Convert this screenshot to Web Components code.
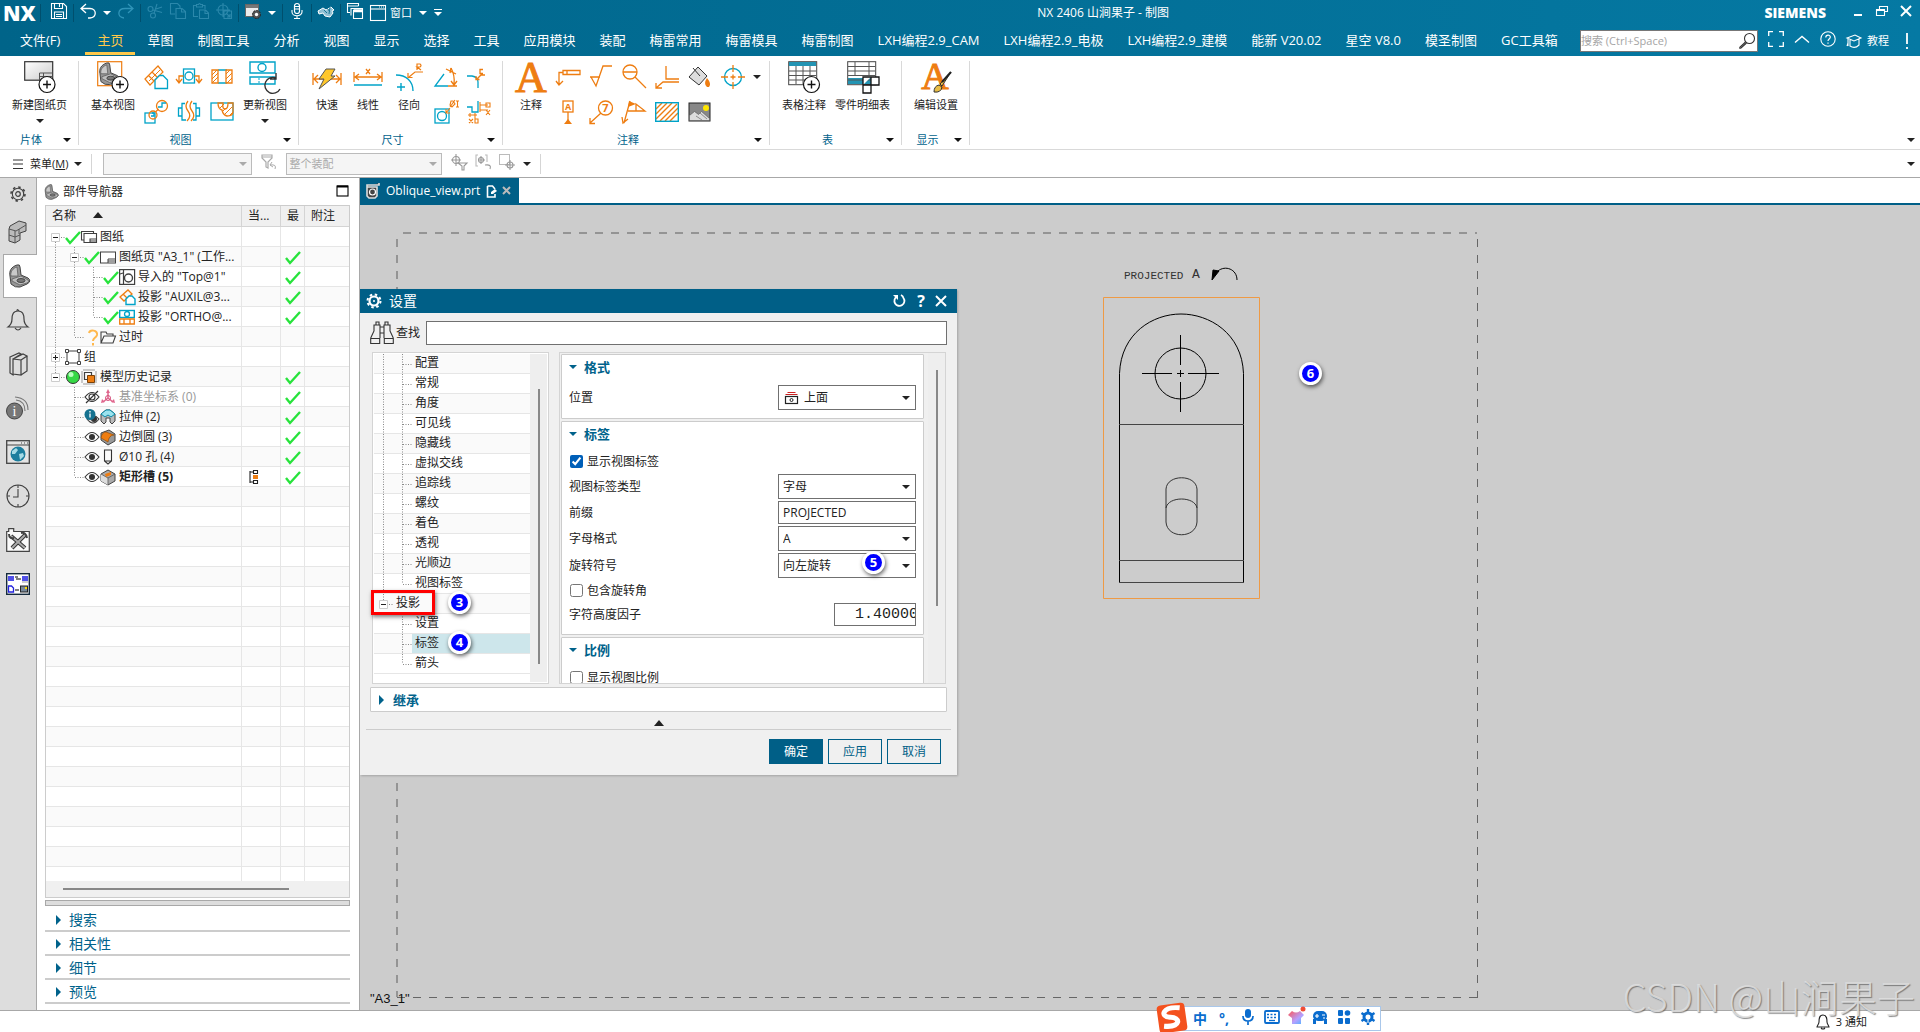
<!DOCTYPE html>
<html lang="zh-CN">
<head>
<meta charset="utf-8">
<title>NX 2406 - 制图</title>
<style>
html,body{margin:0;height:100%;overflow:hidden}
body{font:12px/16px "Open Sans","Noto Sans CJK SC",sans-serif;color:#222;background:#fff}
</style>
</head>
<body>
<nx-app></nx-app>
<script>
const O='#ee7d11',C='#00a3c8',D='#404040';
const s=(c,w=1.3,f='none')=>`fill="${f}" stroke="${c}" stroke-width="${w}"`;
const plus=(x,y,r=8)=>`<circle cx="${x}" cy="${y}" r="${r}" ${s('#111',1.2,'#fff')}/><path d="M${x-4} ${y}h8M${x} ${y-4}v8" ${s('#111',1.4)}/>`;
const bracket=`<path d="M2 12C1 7 3 3 9 1q3-1 3 2l1 8 7 3q4 3-1 6l-7 3q-5 1-9-3z" fill="#969696" stroke="#444" stroke-width="1"/><path d="M3 12C2 8 5 4 9 3l1 9z" fill="#c9c9c9" stroke="#555" stroke-width=".7"/><path d="M4 15l9-3 7 4q2 1-1 3l-7 2-8-4z" fill="#bdbdbd" stroke="#555" stroke-width=".7"/><ellipse cx="13" cy="16.500" rx="4" ry="2" fill="#777" stroke="#333" stroke-width=".8"/>`;
const I={
caret:[8,8,`<path d="M0 2h8L4 6z" fill="currentColor"/>`],
caretR:[8,10,`<path d="M1 0v10l5-5z" fill="currentColor"/>`],
caretUp:[10,6,`<path d="M0 6h10L5 0z" fill="currentColor"/>`],
drop:[8,8,`<path d="M0 .500h8" ${s('currentColor',1)}/><path d="M0 3h8L4 7z" fill="currentColor"/>`],
save:[16,16,`<path d="M.5.5h12l3 3v12H.500zM3.500.500v5h8v-5M3.500 15v-6h9v6M5 11.500h6M5 13.500h6M8.500 1v3" ${s('#fff',1.1)}/>`],
undo:[16,16,`<path d="M6 1L1 5.500 6 10M1 5.500h9c7 0 7 9 0 9.500H8" ${s('#fff',1.3)}/>`],
redo:[16,16,`<path d="M10 1l5 4.500-5 4.500M15 5.500H7c-8 0-8 9-1 9.500" ${s('#2f94b8',1.3)}/>`],
cut:[16,16,`<g ${s('#2b88ab',1.1)}><circle cx="3.500" cy="6" r="2.500"/><circle cx="6" cy="12.500" r="2.500"/><path d="M6 7l9 2.500M7 10.500L10 1M9 6l6-2"/></g>`],
copy:[16,16,`<path d="M5 11H.5V.500h7L10 3v2M6 5.500h6l3.500 3v7H6zM11.500 5.500v3.500h4" ${s('#2b88ab',1.1)}/>`],
paste:[16,16,`<path d="M5 13.500H.500V2.500h3M9 2.500h3V6M3.500 4V1.500h2q1-2 2 0h2V4zM6.500 7h6l3 3v5.500h-9zM12 7v3.500h3.500" ${s('#2b88ab',1.1)}/>`],
target:[16,16,`<g ${s('#2b88ab',1.1)}><circle cx="7" cy="7" r="5"/><path d="M0 7h14M7 0v14M8 8h7.500v7.500H8zM10 10l4 4M14 11v3h-3"/></g>`],
wingear:[16,16,`<rect x=".5" y="1.500" width="13" height="12" fill="#ececec" stroke="#666"/><path d="M1 2h12v3H1z" fill="#777"/><circle cx="11.500" cy="11.500" r="4" fill="#555" stroke="#222" stroke-dasharray="2 1"/><circle cx="11.500" cy="11.500" r="1.700" fill="#fff"/>`],
mic:[16,16,`<rect x="5.500" y=".5" width="5" height="10" rx="2.500" ${s('#fff',1.2)}/><path d="M5.500 3.500h5M5.500 6h5M3 7v2c0 5 10 5 10 0V7M8 13v2.500M5 15.500h6" ${s('#fff',1.1)}/>`],
hand:[16,16,`<path d="M0 8l5-3 3 2 5-3 3 3-2 1 1 2-3 4-5-1-2-3-4 1z" fill="#8fc0d4" stroke="#fff"/><path d="M6 7l3 3M9 5l3 4M12 4l-1 7" ${s('#1b7797',1)}/>`],
wins:[16,16,`<g ${s('#fff',1.1)}><path d="M3 9.500H.500v-9h11V3M.500 3h11M4 12.500V5.500h11.500v10H6.500V7"/><path d="M6.500 8.500h9M6.500 7h9" stroke-width="1.600"/></g>`],
win:[16,16,`<rect x=".5" y=".5" width="15" height="15" ${s('#fff',1.1)}/><path d="M.500 4h15" ${s('#fff',1.1)}/><path d="M9 2h1M11 2h1M13 2h1" ${s('#fff',1)}/>`],
min:[12,12,`<path d="M2 10h8" ${s('#fff',2)}/>`],
restore:[12,12,`<path d="M3.500 4V1.500h8v5H9M.500 4.500h8v6h-8zM.500 5.500h8" ${s('#fff',1.1)}/>`],
close:[12,12,`<path d="M1 1l10 10M11 1L1 11" ${s('currentColor',2)}/>`],
search:[16,16,`<circle cx="10.500" cy="5.500" r="5" ${s('#333',1.1)}/><path d="M6.500 9L1 14q-1 2 1 1L7.500 10" ${s('#333',1.1)}/>`],
full:[16,16,`<path d="M.7 5V.7H5M11 .7h4.300V5M15.300 11v4.300H11M5 15.300H.7V11" ${s('#fff',1.3)}/>`],
chev:[16,16,`<path d="M1 11.500l7-6 7 6" ${s('#fff',1.4)}/>`],
help:[16,16,`<circle cx="8" cy="8" r="7.200" ${s('#fff',1.1)}/><path d="M5.800 6.500c0-3 4.500-3 4.500-.4C10.300 8 8 8 8 10M8 11.500v1.300" ${s('#fff',1.2)}/>`],
hat:[16,16,`<path d="M1 5l8-3 6 3-7 3zM4 7v6c3 2 6 2 9-1V6M2 6v7M2 10l-1 3" ${s('#fff',1.1)}/>`],
bang:[4,16,`<path d="M2 0v11M2 14v2" ${s('#fff',1.8)}/>`],
newsheet:[32,32,`<defs><linearGradient id="g" x2="1" y2="1"><stop stop-color="#fff"/><stop offset="1" stop-color="#ccc"/></linearGradient></defs><rect x=".7" y=".7" width="28" height="18.500" fill="url(#g)" stroke="#333" stroke-width="1.200"/><path d="M15.500 19v-7h13M15.500 15.500h13M19.500 12v7" ${s('#555',1)}/>${plus(23,23.500)}`],
baseview:[32,32,`<rect x=".7" y=".7" width="24" height="24" ${s(O,1.2)}/><g transform="translate(1,1) scale(.98)">${bracket}</g>${plus(23,23.500)}`],
auxview:[24,24,`<path d="M1 14L14 1l5 6L6 20zM4.500 10.500l6 6M8 7l6 6" ${s(O,1.2)}/><path d="M5 16L16 5" ${s(O,1)}/><path d="M11 23.500V15l4.500-4.500H19l4.500 4.500v8.500z" ${s(C,1.3,'#fff')}/>`],
section:[24,24,`<rect x="6.500" y="4" width="11" height="14" ${s(C)}/><circle cx="12" cy="11" r="4" ${s(C)}/><path d="M2 18V11h4.500M17.500 11H22v7M-1 14l3 4 3-4M19 14l3 4 3-4" ${s(O)}/>`],
half:[22,24,`<path d="M7 5h9M7 18h9" ${s(C)}/><path d="M1 5h6v13H1zM15 5h6v13h-6z" ${s(O)}/><path d="M1 10l5-5M1 14l6-6M1 18l6-6M15 9l4-4M15 14l6-6M16 18l5-5" ${s(O,1)}/>`],
detail:[24,24,`<rect x="1" y="13" width="10" height="10" ${s(C)}/><circle cx="9" cy="15" r="4" ${s(O)}/><circle cx="18" cy="6" r="5.500" ${s(O)}/><path d="M11.500 12l3-3" ${s(O)}/><path d="M7 16h3v-3h-2M14 7h4V3h4" ${s(C)}/>`],
broken:[24,24,`<path d="M8 3.500H5V20h4M5 8H1.500v8H5M16 3.500h3V20h-3M19 8h3.500v8H19" ${s(C)}/><path d="M11 1q-4 5 0 10t-1 10M15 1q-4 5 0 10t-1 10" ${s(O)}/>`],
breakout:[24,24,`<rect x="1" y="3" width="22" height="17" ${s(C)}/><path d="M8 3q0 6 4 7 1 5 5 6 6 0 6-4V3h-5q0 6-3 6t-2-6z" ${s(O)}/><path d="M10 8l4-4M13 11l3-3M15 14l7-7M19 16l4-4" ${s(O,1)}/>`],
update:[32,32,`<path d="M1 1h25v11H1zM1 16h25v7H1z" ${s(C,1.4)}/><circle cx="13" cy="6.500" r="4" ${s(C,1.4)}/><path d="M10 17v6" ${s(C,1)} stroke-dasharray="2 1"/><path d="M27 17a8 8 0 1 0 4 11M27 12v6h-6" ${s('#333',1.4)}/>`],
rapid:[32,32,`<path d="M2 12v12M30 12v12M3 18h26M7 14l-4 4 4 4M25 14l4 4-4 4" ${s(O,1.3)}/><path d="M15 8h9l-4 7h4L8 28l5-10H8z" fill="#ffc72b" stroke="#555"/>`],
linear:[32,32,`<path d="M2 11v10M30 11v10M3 16h26M7 13l-4 3 4 3M25 13l4 3-4 3M14 8l4 5M18 8l-4 5" ${s(O,1.3)}/><path d="M2 24h28" ${s(C,1.5)}/>`],
radial:[32,32,`<path d="M3 14C13 14 20 20 20 30M8 22v8M4 26h8" ${s(C,1.4)}/><path d="M30 11h-8l-6 5M15 12v4.500h4.500M24 9V3h3q2 1.500 0 3h-3l4 3" ${s(O,1.2)}/>`],
angle:[24,24,`<path d="M10 9L1 21h13" ${s(C)}/><path d="M12 4l10 5M14 21h9M17 3q4 7 3 16M17 3l-1 5M20 20l-3-4M20 20l3-4" ${s(O)}/>`],
chamfer:[24,24,`<path d="M0 11h5q6 1 6 6v6" ${s(C)}/><path d="M18 10h-4l-4 4M9 11v3.500h3.500M16 4.500h-3v4h3" ${s(O)}/>`],
hole:[24,24,`<rect x="1" y="9" width="14" height="14" ${s(C)}/><circle cx="8" cy="16" r="4.500" ${s(C)}/><path d="M12 13l4-5M12 9v4h4M17 1h2l2 3-3 3-2-2zM16 7l5-7M22 1h3M23.500 1v6M22 7h3" ${s(O,1.1)}/>`],
ordinate:[24,24,`<path d="M0 7h5v5h6V1" ${s(C,1.3)}/><path d="M13 5h8M13 10h8M13 2v10M1 15h9M3 13v4M8 13v10M2 19l4 4M6 19l-4 4M19 3h4v4h-4zM19 10l4 5M23 10l-4 5M8 19h3v4H8z" ${s(O,1.1)}/>`],
note:[32,32,`<text x="16" y="31" text-anchor="middle" font-family="Liberation Serif" font-size="44" fill="${O}" stroke="${O}">A</text>`],
note2:[32,32,`<text x="15" y="28" text-anchor="middle" font-family="Liberation Serif" font-size="38" fill="${O}" stroke="${O}">A</text><path d="M31 11L20 23l2 2zM19 24q-5 1-5 7 7 1 8-5z" fill="#e8bd46" stroke="#333"/><path d="M31 11l-9 10" ${s('#222',2)}/>`],
fcf:[24,24,`<path d="M7 5.500h17v4H7zM11 5.500v4M7 7.500H3V20M0 16l3 4 4-4" ${s(O)}/>`],
surface:[24,24,`<path d="M1 12h10M2 12l5 9L14 1h9" ${s(O)}/>`],
balloon0:[24,24,`<circle cx="8" cy="7" r="7" ${s(O)}/><path d="M1 7h14M13 12l11 11" ${s(O)}/>`],
targetpt:[24,24,`<path d="M11 1v13h13M24 17H8l-7 6M1 18v5h6" ${s(O)}/>`],
bucket:[24,24,`<path d="M1 12L10 2l9 9-8 9z" fill="#ddd" stroke="#333"/><path d="M5 3l7 8" ${s('#333',1)}/><path d="M19 22q-4-3 0-9 5 6 2 9z" fill="${O}"/>`],
center:[24,24,`<circle cx="12" cy="12" r="8.500" ${s(C)}/><path d="M12 0v7M12 17v7M0 12h7M17 12h7M12 9.500v5M9.500 12h5" ${s(O)}/>`],
datum:[24,24,`<rect x="7" y="1" width="10" height="11" ${s(O)}/><text x="12" y="10" text-anchor="middle" font-family="Open Sans" font-size="9" font-weight="700" fill="${O}">A</text><path d="M12 12v9" ${s(O)}/><path d="M8 24h8l-4-5z" fill="${O}"/>`],
balloon:[24,24,`<circle cx="16.500" cy="8" r="7" ${s(O)}/><text x="16.500" y="12" text-anchor="middle" font-family="Open Sans" font-size="11" font-weight="700" fill="${O}">7</text><path d="M12 13L1 23M1 18v5.500h5" ${s(O)}/>`],
flag:[24,24,`<path d="M8 1L2 23M0 17l1 6 5-4M6 11h17l-9-7v7" ${s(O)}/><path d="M7 1l7 3-8 3z" fill="${O}"/>`],
hatch:[24,24,`<path d="M1 9l6-6M1 14L12 3M1 19L17 3M5 21L22 4M10 21L23 8M15 21l8-8" ${s(O,1.4)}/><rect x=".7" y="2.700" width="22.600" height="18.600" ${s(C,1.4)}/>`],
image:[24,24,`<rect x="1" y="3" width="21" height="18" fill="#888" stroke="#222"/><path d="M1.500 20.500v-5l5-4 4 3 3-3 8 7v2z" fill="#ddd" stroke="#555" stroke-width=".6"/><path d="M8 16l6 4M12 13l7 6" ${s('#777',.8)}/><circle cx="18" cy="8" r="3" fill="#ffe600"/>`],
tabnote:[32,32,`<rect x=".7" y=".7" width="28" height="23" fill="#fff" stroke="#444"/><path d="M1 1h27v4H1z" fill="#2394b3"/><path d="M1 10h27M1 14.500h27M1 19h27M8 5v18M15 5v18M22 5v18" ${s('#555',1)}/>${plus(23.500,23.500)}`],
parts:[32,32,`<rect x=".7" y=".7" width="28" height="23" fill="#fff" stroke="#444"/><path d="M1 17h27v6H1z" fill="#2394b3"/><path d="M1 5.500h27M1 10h27M1 14.500h27M1 19h27M8 1v14M22 1v14" ${s('#555',1)}/><path d="M16 16h16v8h-8v8h-8zM16 24h8v-8" ${s('#111',1.3,'#fff')}/>`],
menu:[12,12,`<path d="M1 2h10M1 6h10M1 10.500h10" ${s('#333',1)}/>`],
funnel:[16,16,`<path d="M1 1h10v3L7 8v6l-2-1V8L1 4zM1 3h10" ${s('#aaa',1.2)}/><path d="M14 15q2-5-5-4M11 8l-2 3 3 2" ${s('#aaa',1)}/>`],
selA:[16,16,`<circle cx="5" cy="6" r="3.500" ${s('#999',1.1)}/><path d="M0 6h10M5 0v12M7 9h9l-3 3v4h-2v-4z" ${s('#999',1.1)}/>`],
selB:[16,16,`<path d="M3 1H1v11h2M10 1h2v7" ${s('#bbb',1.1)}/><circle cx="6" cy="6" r="2.500" ${s('#999',1.1)}/><path d="M3 6h7M6 2v8M15 15q2-5-5-4" ${s('#999',1.1)}/>`],
selC:[16,16,`<rect x=".5" y=".5" width="10" height="10" ${s('#bbb',1)}/><circle cx="11" cy="11" r="3" ${s('#999',1.1)}/><path d="M6 11h10M11 6v10" ${s('#999',1.1)}/>`],
gear:[16,16,`<circle cx="8" cy="8" r="2.300" ${s(D,1.2)}/><circle cx="8" cy="8" r="5.700" ${s(D,1.1)}/><circle cx="8" cy="8" r="7" ${s(D,1.500)} stroke-dasharray="2.500 3"/>`],
cube:[24,24,`<path d="M4 6l9-5 7 2v8l-6 2v7l-5 3-6-2V9z" fill="#bbb" stroke="#444"/><path d="M3 9l7 2 10-6M9 23V11M3 15l6 2 5-2M13 9v5" ${s('#555',1)}/>`],
bracket:[24,24,bracket],
bell:[24,24,`<path d="M12 3c-5 0-6 4-6 8 0 5-4 8-4 8h20s-4-3-4-8c0-4-1-8-6-8zM9 20q3 4 6 0M11 3q0-3 2 0" ${s(D,1.2)}/>`],
book:[24,24,`<path d="M4 5l9-4 2 1-8 5v16l-3-2zM7 7l8 1v15l-8-1zM9 6l8-4 4 2-6 4M15 23l6-4V4" ${s(D,1.2)}/>`],
info:[24,24,`<circle cx="8.500" cy="15" r="8" fill="#777" stroke="#444"/><text x="8.500" y="20" text-anchor="middle" font-family="Liberation Serif" font-size="14" fill="#fff">i</text><path d="M10 4q9 1 9 11M9 1q13 1 13 13" ${s('#777',1.1)}/>`],
web:[24,24,`<rect x=".7" y=".7" width="22.600" height="22.600" fill="#e4e4e4" stroke="#444" stroke-width="1.300"/><path d="M1 5h22M15 3h1M18 3h1M21 3h1" ${s('#444',1)}/><circle cx="12" cy="14" r="7.500" fill="#1c7e9e"/><path d="M6 11l4-3 2 2-3 4-3 0zM13 14l4-1 1 3-4 4zM14 8l3 2" fill="#a6dbe6"/>`],
clock:[24,24,`<circle cx="12" cy="12" r="11" ${s(D,1.1)}/><path d="M12 5v8H7M12 1v3M12 20v3M1 12h3M20 12h3" ${s(D,1.1)}/>`],
tools:[24,24,`<path d="M.7 3.500h2V.7h5v2.800h15.600v19.800H.7z" fill="#fafafa" stroke="#444" stroke-width="1.200"/><path d="M5 8l14 12M19 7L6 20" ${s('#333',4)}/><path d="M5 8l14 12M19 7L6 20" ${s('#aaa',2)}/><path d="M3 6q0 5 5 4M15 5q5-1 6 5" ${s('#444',2)}/>`],
blue:[24,24,`<rect x=".7" y="1.700" width="22.600" height="20.600" fill="#fff" stroke="#142a3c" stroke-width="1.400"/><path d="M2 4h6v5H2zM16 4h6v5h-6z" fill="#5050e8"/><path d="M9 5h3M10 7h5M9 18h4" ${s('#000',1)}/><path d="M2.500 14h3l2 2v4h-5z" ${s('#22d',1.3)}/><rect x="14.500" y="14" width="7" height="6" fill="#789" stroke="#222"/><path d="M19 15h2v2h-2z" fill="#fd0"/><path d="M16 10h6" ${s('#777',.7)}/>`],
check:[16,16,`<path d="M1 9l4 5L15 3" ${s('#27e33c',2.400)}/>`],
q:[16,16,`<path d="M5 4c1-4 9-3 8 2-1 3-4 3-4 6M9 14v2.500" ${s('#ffb84d',2)}/>`],
sheets:[16,16,`<path d="M3 11H.500V2.500h12V5M3 4.500h12.500v9H3zM9 13.500V10h6.500M9 12h6" ${s(D,1.1)}/>`],
sheet:[16,16,`<rect x=".5" y="3" width="15" height="11" fill="#fff" stroke="#404040"/><path d="M8 14v-4h7.500M8 12h7" ${s(D,1)}/>`],
imp:[16,16,`<rect x=".6" y=".6" width="15" height="14.800" ${s(D,1.2)}/><path d="M4.500 1v14M1 5l3-1" ${s(D,1.2)}/><circle cx="9.500" cy="9" r="4" ${s(D,1.4)}/>`],
aux:[16,16,`<path d="M1 8l8-7 4 4-8 7zM4 5l4 4" ${s(O,1.3)}/><path d="M7 15.500V10l3-3h3l3 3v5.500z" ${s(C,1.4,'#fff')}/>`],
ortho:[16,16,`<rect x=".7" y="1.500" width="14.600" height="7" ${s(C,1.4)}/><circle cx="8" cy="5" r="2.500" ${s(C,1.3)}/><path d="M.7 10h14.600v5H.7zM5 10v5M11 10v5" ${s(O,1.3)}/>`],
folder:[16,16,`<path d="M1 14V3h5l1 2h6v2M1 14l3-7h11.500L13 14z" ${s(D,1.1)}/>`],
grp:[16,16,`<rect x="2" y="2" width="12" height="12" ${s(D,1)}/><path d="M.500.500h3v3h-3zM12.500.500h3v3h-3zM.500 12.500h3v3h-3zM12.500 12.500h3v3h-3z" ${s(D,1,'#fff')}/>`],
ball:[16,16,`<circle cx="8" cy="8" r="6.500" fill="#35d845" stroke="#333"/><circle cx="6" cy="5.500" r="2.500" fill="#b8ffbe"/>`],
hist:[16,16,`<path d="M2 1h12M2 15h12M1 2v12M15 2v12" ${s('#999',1)}/><path d="M3.500 3.500h7v7h-7z" ${s(D,1.2)}/><path d="M6.500 6.500h7v7h-7z" fill="${O}" stroke="#7a4108"/>`],
eye:[16,16,`<path d="M1 8q7-9 14 0-7 9-14 0z" ${s('#333',1.1)}/><circle cx="8" cy="8" r="3" fill="#333"/>`],
eyeoff:[16,16,`<path d="M1 8q7-9 14 0-7 9-14 0zM2 14L14 2" ${s('#333',1.2)}/><circle cx="8" cy="8" r="3" ${s('#333',1.1)}/>`],
eyeinfo:[16,16,`<path d="M3 10q6-7 12 0-6 8-12 0z" ${s('#333',1.1,'#ddd')}/><circle cx="10" cy="10" r="3" fill="#333"/><circle cx="6" cy="5.500" r="5.500" fill="#14718f"/><path d="M6 2v1.500M6 4.500v4" ${s('#fff',1.3)}/>`],
csys:[16,16,`<path d="M8 2v7l-5 4M8 9l5 4" ${s('#e0668d',1.5)}/><path d="M8 0l2 4H6zM1 14l1-4 3 3zM15 14l-1-4-3 3z" fill="#e0668d"/><circle cx="8" cy="9" r="2.500" ${s('#d4507b',1)}/>`],
extr:[16,16,`<path d="M1 5l5-4h4l5 4v7l-3 3-2-2V9H6v4l-2 2-3-3z" fill="#bbb" stroke="#444"/><path d="M1 5l5-4h4l5 4-4 3-3-2-3 2z" fill="#9be3ee" stroke="#0a8aa8"/>`],
edge:[16,16,`<path d="M1 4l8-3 6 4v7l-7 4-7-5z" fill="#999" stroke="#444"/><path d="M1 9q1-6 5-6l8 3q-5 0-6 7z" fill="${O}" stroke="#8a4500" stroke-width=".6"/>`],
drill:[16,16,`<path d="M4.500 1h7v11L8 15l-3.500-3zM4.500 12h7" ${s('#333',1.1)}/>`],
slot:[16,16,`<path d="M1 5l7-4 7 4v7l-7 4-7-4z" fill="#aaa" stroke="#444"/><path d="M1 5l7 4v7l-7-4z" fill="#ddd"/><path d="M1 5l7 4 7-4M8 9v7" ${s('#555',.8)}/><path d="M5 5l6-2v3L6 8z" fill="${O}"/>`],
cur:[16,16,`<path d="M5 2v12M5 3h3M5 13h3M8.500 1.500h4v3h-4zM8.500 11.500h4v3h-4z" ${s('#222',1.1)}/><path d="M8 6h5v4H8z" fill="${O}"/>`],
max:[13,13,`<rect x="1" y="1" width="11" height="10" ${s('#000',1.1)}/><path d="M1 1.500h11" ${s('#000',2)}/>`],
bino:[24,24,`<path d="M.7 17.500h9v5h-9zM14.300 17.500h9v5h-9zM.7 17L4 10V4h6v13M23.300 17L20 10V4h-6v13M6 4V1h3v3M15 4V1h3v3M10 6h4M10 12h4" ${s('#333',1.1)}/>`],
gearw:[16,16,`<circle cx="8" cy="8" r="4.500" ${s('#fff',2.2)}/><circle cx="8" cy="8" r="6.500" ${s('#fff',2)} stroke-dasharray="2.500 2.600"/><circle cx="8" cy="8" r="1" fill="#fff"/>`],
reset:[14,14,`<path d="M4 3.500a5 5 0 1 0 6.500 1.500Q10 3 8 2" ${s('#fff',1.8)}/><path d="M0 2h5v5z" fill="#fff"/>`],
part:[16,16,`<path d="M1 4h10v9l-2 2H3l-2-2zM1 4V2h12V0" ${s('#ddd',1.6,'#444')}/><circle cx="6.500" cy="9" r="3" ${s('#fff',1.2)}/>`],
edit:[12,14,`<path d="M1.500 2h5l2.500 3M9 10v3H1.500V2" ${s('#fff',1.6)}/><path d="M5 10V8l4-3 2 2-4 3z" fill="#fff"/>`],
above:[16,16,`<path d="M3.500 2.500h8M1.500 4.500h12" ${s('#c22',1)}/><rect x="1.500" y="6.500" width="12" height="7" ${s('#222',1.2,'#fff')}/><circle cx="7.500" cy="10" r="1.500" ${s('#222',1)}/>`],
bellS:[14,16,`<path d="M7 1C3 1 3 5 3 8c0 2-2 4-2 5h12c0-1-2-3-2-5 0-3 0-7-4-7zM5 14q2 2 4 0" ${s('#222',1.1)}/>`],
imic:[16,16,`<rect x="5" y="0" width="6" height="9" rx="3" fill="#0a6cce"/><path d="M3 7q0 5 5 5t5-5M8 12v4" ${s('#0a6cce',1.7)}/>`],
ikey:[16,16,`<rect x="1" y="2" width="14" height="12" rx="1" ${s('#0a6cce',1.8)}/><path d="M3 5.500h10M3 8.500h10" ${s('#0a6cce',1.5)} stroke-dasharray="2 1.500"/><path d="M5 11.500h6" ${s('#0a6cce',1.3)}/>`],
ishirt:[16,16,`<defs><linearGradient id="h" x2="1" y2="1"><stop stop-color="#f55"/><stop offset=".6" stop-color="#b6a0ff"/><stop offset="1" stop-color="#45b6ff"/></linearGradient></defs><path d="M4 2q4 3 8 0l4 4-3 3v6H4V9L0 6z" fill="url(#h)"/><circle cx="15" cy="0" r="2.500" fill="#f04c35"/>`],
igame:[16,16,`<rect x="1" y="2" width="14" height="10" rx="5" fill="#0a6cce"/><path d="M2.500 10v5M13.500 10v5" ${s('#0a6cce',3)}/><path d="M5 5v4M3 7h4M10 6h3M11 9h2" ${s('#fff',1.2)}/>`],
igrid:[16,16,`<rect x="2" y="1" width="5" height="6" rx="1" fill="#0a6cce"/><rect x="2" y="9" width="5" height="6" rx="1" fill="#0a6cce"/><rect x="9" y="9" width="5" height="6" rx="1" fill="#0a6cce"/><circle cx="11.500" cy="4" r="2.800" fill="#0a6cce"/>`],
igear:[16,16,`<circle cx="8" cy="8" r="4" ${s('#0a6cce',3)}/><path d="M8 0v4M8 12v4M1.500 4l3 2M11.500 10l3 2M14.500 4l-3 2M4.500 10l-3 2" ${s('#0a6cce',2.400)}/><path d="M8 8v6" ${s('#fff',1)}/><circle cx="8" cy="7.500" r="1.500" fill="#fff"/>`],
sogou:[32,32,`<g transform="rotate(-8 16 16)"><rect x="2" y="2" width="28" height="28" rx="4" fill="#f4511e"/><path d="M25 7C8 3 4 13 14 15c11 1 10 12-7 8" fill="none" stroke="#fff" stroke-width="5"/></g>`]
};
const BASE=`:host{display:block;box-sizing:border-box}*,*::before{box-sizing:border-box}button,input,select{font:inherit;color:inherit;margin:0}button{border:0;padding:0;background:none;cursor:pointer}a{color:inherit;text-decoration:none}`;
function reg(tag,css,html){customElements.define(tag,class extends HTMLElement{connectedCallback(){if(this.shadowRoot)return;const r=this.attachShadow({mode:'open'});r.innerHTML=`<style>${BASE}${css}</style>`+(typeof html==='function'?html(this):html);}});}
const ic=(n,x='')=>`<nx-icon name="${n}" ${x}></nx-icon>`;

reg('nx-icon',`:host{display:inline-block;flex:none;line-height:0}svg{display:block;overflow:visible}`,e=>{
  const [w,h,m]=I[e.getAttribute('name')];return `<svg width="${w}" height="${h}" viewBox="0 0 ${w} ${h}" aria-hidden="true">${m}</svg>`;});

const bi=(n,l)=>`<button aria-label="${l}">${ic(n)}</button>`;
reg('nx-titlebar',`:host{display:flex;align-items:center;height:26px;color:#fff}
.logo{font:800 21px/26px "Open Sans",sans-serif;width:40px;padding-left:3px}
.tools{display:flex;align-items:center;gap:7px;padding-left:10px}
i{width:1px;height:18px;background:#004f6d;margin:0 -1px}
.first{margin:0}.w{display:flex;gap:4px;align-items:center;font-size:11px}
h1{flex:1;text-align:center;font-size:12px;line-height:26px;font-weight:400;margin:0}
b{font-size:14px;font-weight:800;margin-right:26px}
.ctl{display:flex;gap:12px;padding-right:8px;align-items:center}`,`
<span class="logo">NX</span><i class="first"></i>
<div class="tools">${bi('save','保存')}<i></i>${bi('undo','撤消')}${ic('caret')}${bi('redo','重做')}<i></i>${bi('cut','剪切')}${bi('copy','复制')}${bi('paste','粘贴')}${bi('target','重复')}<i></i>${bi('wingear','窗口设置')}${ic('caret')}<i></i>${bi('mic','语音')}<i></i>${bi('hand','触控')}<i></i>${bi('wins','层叠')}<button class="w">${ic('win')}窗口</button>${ic('caret')}${ic('drop')}</div>
<h1>NX 2406 山涧果子 - 制图</h1>
<b>SIEMENS</b><div class="ctl">${bi('min','最小化')}${bi('restore','还原')}${bi('close','关闭')}</div>`);

const tabs='文件(F),主页,草图,制图工具,分析,视图,显示,选择,工具,应用模块,装配,梅雷常用,梅雷模具,梅雷制图,LXH编程2.9_CAM,LXH编程2.9_电极,LXH编程2.9_建模,能新 V20.02,星空 V8.0,模圣制图,GC工具箱'.split(',');
reg('nx-menubar',`:host{display:flex;align-items:center;height:30px;color:#fff;font-size:13px;padding-left:8px}
nav{display:flex}a{padding:4px 12px 3px;line-height:18px;height:28px;white-space:nowrap;border-bottom:3px solid transparent}
a:first-child{margin-right:13px}a.on{color:#ffc84a;border-color:#ffc84a}
label{display:flex;align-items:center;flex:0 1 178px;min-width:80px;height:22px;margin-left:auto;background:#fff;border:1px solid #777;padding-right:2px}
input{border:0;outline:0;flex:1;min-width:0;font-size:11px;padding:0}input::placeholder{color:#a5a5a5}
.r{display:flex;gap:10px;align-items:center;padding:0 11px 0 10px;font-size:11px}.t{display:flex;gap:5px;align-items:center;padding-right:6px}`,`
<nav>${tabs.map((t,i)=>`<a href="#"${i==1?' class="on"':''}>${t}</a>`).join('')}</nav>
<label><input placeholder="搜索 (Ctrl+Space)" aria-label="搜索">${ic('search')}</label>
<div class="r">${bi('full','全屏')}${bi('chev','最小化功能区')}${bi('help','帮助')}<button class="t">${ic('hat')}教程</button>${ic('bang')}</div>`);

reg('nx-bigbtn',`:host{min-width:32px;text-align:center}button{display:flex;flex-direction:column;align-items:center;width:100%;font-size:11px;line-height:16px;white-space:nowrap}.i{margin-bottom:4px}.c{margin-top:4px}`,
 e=>`<button>${ic(e.getAttribute('icon'),'class="i"')}<slot></slot>${e.hasAttribute('menu')?ic('caret','class="c"'):''}</button>`);
reg('nx-smalls',`:host{display:grid;grid-template-rows:24px 24px;grid-auto-flow:column;grid-auto-columns:24px;gap:11px 9px;padding-top:4px}button{display:grid;place-items:center}`,
 e=>e.getAttribute('icons').split(' ').map(n=>bi(n,n)).join(''));
reg('nx-group',`:host{display:flex;flex-direction:column;border-right:1px solid #d9d9d9;height:84px}
.c{display:flex;gap:9px;padding:0 11px 0 12px;flex:1}.l{display:flex;align-items:center;color:#00628b;font-size:11px;line-height:16px;padding-right:7px;margin-bottom:-3px}.l span{flex:1;text-align:center}.l nx-icon{color:#111;margin-left:1px}`,
 e=>`<div class="c"><slot></slot></div><div class="l"><span>${e.getAttribute('label')}</span>${ic('caret')}</div>`);
reg('nx-ribbon',`:host{display:flex;align-items:flex-start;height:94px;padding-top:5px;border-bottom:1px solid #d9d9d9;background:#fff}.e{margin:75px 5px 0 auto}.m{margin:12px -3px 0 -1px}`,`
<nx-group label="片体"><nx-bigbtn icon="newsheet" menu>新建图纸页</nx-bigbtn></nx-group>
<nx-group label="视图"><nx-bigbtn icon="baseview">基本视图</nx-bigbtn><nx-smalls icons="auxview detail section broken half breakout"></nx-smalls><nx-bigbtn icon="update" menu>更新视图</nx-bigbtn></nx-group>
<nx-group label="尺寸"><nx-bigbtn icon="rapid">快速</nx-bigbtn><nx-bigbtn icon="linear">线性</nx-bigbtn><nx-bigbtn icon="radial">径向</nx-bigbtn><nx-smalls icons="angle hole chamfer ordinate"></nx-smalls></nx-group>
<nx-group label="注释"><nx-bigbtn icon="note">注释</nx-bigbtn><nx-smalls icons="fcf datum surface balloon balloon0 flag targetpt hatch bucket image center"></nx-smalls><nx-icon class="m" name="caret"></nx-icon></nx-group>
<nx-group label="表"><nx-bigbtn icon="tabnote">表格注释</nx-bigbtn><nx-bigbtn icon="parts">零件明细表</nx-bigbtn></nx-group>
<nx-group label="显示"><nx-bigbtn icon="note2">编辑设置</nx-bigbtn></nx-group>${ic('caret','class="e"')}`);

reg('nx-selbar',`:host{display:flex;align-items:center;gap:9px;height:28px;border-bottom:1px solid #a8a8a8;padding:0 5px 0 12px;font-size:11px;background:#fff}
.menu{display:flex;align-items:center;gap:6px}i{width:1px;height:20px;background:#d5d5d5;margin-right:2px}
.s{display:grid;align-items:center;height:22px;background:#f5f5f5;border:1px solid #bbb;color:#aaa}.s>*{grid-area:1/1}
select{appearance:none;border:0;background:none;width:100%;padding:0 2px;opacity:1;color:#aaa}.s nx-icon{justify-self:end;margin-right:4px;pointer-events:none}
.a{width:149px}.b{width:156px}.g{display:flex;gap:8px;align-items:center}.e{margin-left:auto}`,`
<button class="menu">${ic('menu')}<span>菜单(<u>M</u>)</span>${ic('caret')}</button><i></i>
<div class="s a"><select disabled aria-label="选择类型"><option></option></select>${ic('caret')}</div>${bi('funnel','过滤')}
<div class="s b"><select disabled aria-label="范围"><option>整个装配</option></select>${ic('caret')}</div>
<div class="g">${bi('selA','选择')}${bi('selB','链')}${bi('selC','框选')}${ic('caret')}</div><i></i>${ic('caret','class="e"')}`);

reg('nx-rail',`:host{display:flex;flex-direction:column;width:37px;background:#ddd;border-right:1px solid #a8a8a8}
button{height:44px;display:grid;place-items:center}.first{height:32px}
.on{background:#fff;border:1px solid #a8a8a8;border-right:0;margin:0 -1px 0 3px;padding-right:2px}`,
 'gear cube bracket bell book info web clock tools blue'.split(' ').map((n,i)=>`<button aria-label="${n}"${i==2?' class="on"':i?'':' class="first"'}>${ic(n)}</button>`).join(''));

reg('nx-guide',`:host{width:19px;height:20px;flex:none}svg{display:block}`,e=>{
 const t=e.getAttribute('t'),d='stroke="#888" stroke-dasharray="1 1.500"';let m='';
 if('|T-+'.includes(t))m+=`<path d="M9.500 0v20" ${d}/>`;if('Le'.includes(t))m+=`<path d="M9.500 0v10" ${d}/>`;if(t=='s')m+=`<path d="M9.500 10v10" ${d}/>`;
 if('TL-+es'.includes(t))m+=`<path d="M10 10.500h9" ${d}/>`;
 if('-+es'.includes(t))m+=`<path d="M5.500 6.500h8v8h-8z" fill="#fff" stroke="#ccc"/><path d="M7 10.500h5${t=='+'?'M9.500 8v5':''}" stroke="#222"/>`;
 return `<svg width="19" height="20">${m}</svg>`;});
const g=x=>[...x].map(c=>`<nx-guide t="${c}"></nx-guide>`).join('');

const rows=[['s','check sheets','图纸',0],['|-','check sheet','图纸页 "A3_1" (工作...',1],['||T','check imp','导入的 "Top@1"',1],['||T','check aux','投影 "AUXIL@3...',1],['||L','check ortho','投影 "ORTHO@...',1],['|L','q folder','过时',0],['+','grp','组',0],['e','ball hist','模型历史记录',1],[' T','eyeoff csys','基准坐标系 (0)',1,'dim'],[' T','eyeinfo extr','拉伸 (2)',1],[' T','eye edge','边倒圆 (3)',1],[' T','eye drill','Ø10 孔 (4)',1],[' L','eye slot','矩形槽 (5)',1,'bold']];
reg('nx-navigator',`:host{display:flex;flex-direction:column;width:323px;padding:0 9px 6px 8px;border-right:1px solid #a8a8a8;background:#fff}
header{display:flex;align-items:center;gap:3px;height:27px;padding-right:1px}header span{flex:1}header nx-bracket16{margin-left:-1px}
.t{flex:1;min-height:0;overflow:hidden;border:1px solid #ccc;border-bottom:0}
table{border-collapse:separate;border-spacing:0;table-layout:fixed;width:100%}
th{font-weight:400;text-align:left;background:#f0f0f0;height:21px;border-right:1px solid #d4d4d4;border-bottom:1px solid #d4d4d4;padding:0 0 0 6px;line-height:20px}
th nx-icon{margin-left:17px;vertical-align:2px}td{height:20px;padding:0;border-right:1px solid #e6e6e6;border-bottom:1px solid #e6e6e6}
th:last-child,td:last-child{border-right:0}
tbody tr:nth-child(even){background:#fafafa}td>div{display:flex;align-items:center;height:19px;white-space:nowrap;overflow:hidden}td span{padding-left:3px}
td:nth-child(n+2)>div{justify-content:center}td:nth-child(2)>div{justify-content:flex-start;padding-left:3px}
.dim span{color:#999}.bold span{font-weight:700}
.sc{height:17px;background:#f0f0f0;border:1px solid #ccc;border-top:0;padding:7px 60px 0 17px}.sc div{height:2px;background:#888}
.sp{height:6px;margin:2px 0;background:#ddd;border:1px solid #a8a8a8}
.ac{display:flex;align-items:center;gap:6px;height:24px;width:100%;border-bottom:2px solid #ccc;padding-left:10px;font-size:14px;color:#00628b;padding-top:2px}`,`
<header><nx-bracket16></nx-bracket16><span>部件导航器</span>${ic('max')}</header>
<div class="t"><table><colgroup><col><col style="width:39px"><col style="width:24px"><col style="width:44px"></colgroup>
<thead><tr><th>名称${ic('caretUp')}</th><th>当...</th><th>最</th><th>附注</th></tr></thead><tbody>
${rows.map(r=>`<tr class="${r[4]||''}"><td><div>${g(r[0])}${r[1].split(' ').map(n=>ic(n)).join('')}<span>${r[2]}</span></div></td><td><div>${r[4]=='bold'?ic('cur'):''}</div></td><td><div>${r[3]?ic('check'):''}</div></td><td></td></tr>`).join('')}
${'<tr><td></td><td></td><td></td><td></td></tr>'.repeat(20)}</tbody></table></div>
<div class="sc"><div></div></div><div class="sp"></div>
${['搜索','相关性','细节','预览'].map(t=>`<button class="ac">${ic('caretR')}${t}</button>`).join('')}`);
reg('nx-bracket16',`:host{width:16px;height:16px}svg{display:block}`,`<svg width="16" height="16" viewBox="0 0 24 24">${bracket}</svg>`);

reg('nx-badge',`:host{position:absolute;width:23px;height:23px;border-radius:50%;background:#00f;border:3px solid #fff;color:#fff;font:700 13px/17px "Open Sans",sans-serif;text-align:center;box-shadow:1px 2px 4px rgba(0,0,0,.6)}`,`<slot></slot>`);

reg('nx-select',`:host{display:grid;align-items:center;border:1px solid #707070;background:#fff;height:25px}
select,.c,.i{grid-area:1/1}select{appearance:none;border:0;background:none;height:100%;width:100%;padding:0 4px}.c{justify-self:end;margin-right:5px;pointer-events:none}.i{margin-left:5px}.i~select{padding-left:25px}`,
 e=>`${e.getAttribute('icon')?ic(e.getAttribute('icon'),'class="i"'):''}<select aria-label="${e.getAttribute('label')}"><option>${e.getAttribute('value')}</option></select>${ic('caret','class="c"')}`);
reg('nx-card',`:host{background:#fff;border:1px solid #ccc;border-radius:1px;padding:0 7px}
h2{margin:0;display:flex;align-items:center;gap:7px;height:23px;font-size:13px;line-height:18px;font-weight:700;color:#00628b}`,
 e=>`<h2>${ic(e.hasAttribute('closed')?'caretR':'caret')}${e.getAttribute('label')}</h2><slot></slot>`);
const dl=[['|T','配置'],['|T','常规'],['|T','角度'],['|T','可见线'],['|T','隐藏线'],['|T','虚拟交线'],['|T','追踪线'],['|T','螺纹'],['|T','着色'],['|T','透视'],['|T','光顺边'],['|L','视图标签'],['e','投影'],[' T','设置'],[' T','标签',1],[' L','箭头']];
reg('nx-dialog',`:host{position:absolute;left:0;top:84px;width:597px;background:#f0f0f0;box-shadow:1px 1px 2px rgba(0,0,0,.2)}
header{display:flex;align-items:center;height:24px;background:#005f87;color:#fff;padding:0 10px 0 6px;font-size:14px;line-height:20px}header span{flex:1;padding-left:7px}header div{display:flex;gap:10px;align-items:center;font-weight:700;font-size:16px}
.find{display:flex;align-items:center;padding:8px 10px 7px;gap:2px}.find label{padding-right:4px}.find input{flex:1;height:24px;border:1px solid #707070;background:#fff;padding:0 4px}
.main{display:flex;gap:10px;padding:0 11px 0 12px;height:332px}
.tree{display:flex;width:177px;border:1px solid #d4d4d4;padding:1px;background:#fff}.tree ul{margin:0;padding:0;list-style:none;flex:1}
.bar{width:17px;background:#eee;display:flex;justify-content:center}.bar div{width:2px;background:#888;margin:35px 0 18px}.opts .bar div{margin:17px 0 77px}
li{display:flex;height:20px;align-items:stretch;border-bottom:1px solid #e6e6e6}li:nth-child(odd){background:#fafafa}li span{flex:1;padding-left:3px;line-height:18px}.on span{background:#cde6eb}
li nx-guide{margin-bottom:-1px}
.opts{flex:1;display:flex;gap:3px;border:1px solid #d4d4d4;overflow:hidden}.cards{flex:1;display:flex;flex-direction:column;gap:2px;padding:1px}
.cards nx-card{flex:none}
.row{display:flex;justify-content:space-between;align-items:center;min-height:23px;margin-bottom:2px}.row nx-select,.row .txt{width:138px}.chk{justify-content:flex-start;gap:4px;min-height:21px}
.chk input{width:13px;height:13px;margin-left:1px;accent-color:#005fb8}
.txt{height:23px;border:1px solid #707070;background:#fff;padding:0 4px}.row .num{width:82px;padding:0 0 0 20px;font:15px/20px "Liberation Mono",monospace}
.pos{padding:7px 0 8px;margin:0}.sec{height:6px}
.inh{margin:3px 10px 0}.up{display:grid;place-items:center;height:18px;border-bottom:1px solid #ccc;margin:0 6px;padding-top:5px}
footer{display:flex;justify-content:flex-end;gap:5px;padding:9px 16px 11px}footer button{width:54px;height:25px;border:1px solid #005f87;color:#005f87;background:#f0f0f0}footer .ok{background:#005f87;color:#fff}
.mark{position:absolute;left:11px;top:301px;width:64px;height:25px;border:3px solid #f00;box-shadow:1px 2px 4px rgba(0,0,0,.5)}
.b3{left:88px;top:302px}.b4{left:88px;top:342px}.b5{left:502px;top:262px}`,`
<header>${ic('gearw')}<span>设置</span><div>${bi('reset','重置')}<button>?</button>${bi('close','关闭')}</div></header>
<div class="find">${ic('bino')}<label for="f">查找</label><input id="f"></div>
<div class="main"><div class="tree"><ul>${dl.map(r=>`<li${r[2]?' class="on"':''}>${g(r[0])}<span>${r[1]}</span></li>`).join('')}</ul><div class="bar"><div></div></div></div>
<div class="opts"><div class="cards">
<nx-card label="格式"><div class="row pos"><span>位置</span><nx-select label="位置" icon="above" value="上面"></nx-select></div></nx-card>
<nx-card label="标签"><div class="sec"></div><div class="row chk"><input type="checkbox" id="c1" checked><label for="c1">显示视图标签</label></div>
<div class="row"><span>视图标签类型</span><nx-select label="视图标签类型" value="字母"></nx-select></div>
<div class="row"><label for="p">前缀</label><input class="txt" id="p" value="PROJECTED"></div>
<div class="row"><span>字母格式</span><nx-select label="字母格式" value="A"></nx-select></div>
<div class="row"><span>旋转符号</span><nx-select label="旋转符号" value="向左旋转"></nx-select></div>
<div class="row chk"><input type="checkbox" id="c2"><label for="c2">包含旋转角</label></div>
<div class="row"><label for="n">字符高度因子</label><input class="txt num" id="n" value="1.40000"></div><div class="sec"></div></nx-card>
<nx-card label="比例"><div class="sec"></div><div class="row chk"><input type="checkbox" id="c3"><label for="c3">显示视图比例</label></div></nx-card>
</div><div class="bar"><div></div></div></div></div>
<nx-card class="inh" label="继承" closed></nx-card>
<div class="up">${ic('caretUp')}</div>
<footer><button class="ok">确定</button><button>应用</button><button>取消</button></footer>
<div class="mark"></div><nx-badge class="b3">3</nx-badge><nx-badge class="b4">4</nx-badge><nx-badge class="b5">5</nx-badge>`);

reg('nx-canvas',`:host{flex:1;min-width:0;display:flex;flex-direction:column}
.tabs{display:flex;height:27px;border-bottom:2px solid #005f87;background:#fff}
.tab{display:flex;align-items:center;gap:4px;padding:0 8px 2px 6px;background:#005f87;color:#fff;height:27px}.tab span{margin-right:2px}.tab button{width:9px}
.area{flex:1;position:relative;background:#ccc;overflow:hidden}.area svg{position:absolute;inset:0;width:100%;height:100%}
.b6{left:939px;top:157px}`,`
<div class="tabs"><div class="tab">${ic('part')}<span>Oblique_view.prt</span>${ic('edit')}<button aria-label="关闭"><svg-x></svg-x></button></div></div>
<div class="area"><svg><g transform="translate(-360 -205)" fill="none" stroke="#000" stroke-width="1">
<g stroke="#949494" stroke-width="2" stroke-dasharray="8 8"><path d="M403 233H1477M397 239V997"/></g>
<g stroke="#666" stroke-dasharray="8 8"><path d="M1477.500 239V998M397 997.500H1478"/></g>
<path d="M1103.500 297.500h156v301h-156z" stroke="#ee9a45"/>
<path d="M1119.500 582V373.500C1121 333 1153 314 1181 314S1242 333 1243.500 373.500V582"/>
<path d="M1119 424.500h125M1119 560.500h125M1119 582.500h125" stroke="#444"/>
<circle cx="1180.500" cy="373.500" r="25.500"/><path d="M1142 373.500h30M1177 373.500h7M1188 373.500h31M1180.500 335v30M1180.500 370v7M1180.500 382v30"/>
<path d="M1166 508V489C1167 474 1196 474 1197 489V522C1196 539 1167 539 1166 522V508C1168 496 1195 496 1197 508" stroke="#333"/>
<path d="M1212 280l1-10 6 1z" fill="#000"/><path d="M1218 271c7-6 19-2 19 9"/>
<g fill="#333" stroke="none" font-family="Liberation Mono,monospace"><text x="1124" y="279" font-size="11">PROJECTED</text><text x="1192" y="278" font-size="13">A</text></g>
<text x="370" y="1003" font-family="Liberation Sans,sans-serif" font-size="13" fill="#111" stroke="none">"A3_1"</text>
</g></svg><nx-badge class="b6">6</nx-badge><nx-dialog></nx-dialog></div>`);
reg('svg-x',`:host{line-height:0}`,`<svg width="9" height="9"><path d="M1 1l7 7M8 1L1 8" stroke="#bbb" stroke-width="2"/></svg>`);

reg('nx-ime',`:host{position:absolute;left:1170px;bottom:1px;height:25px;width:211px;display:flex;align-items:center;gap:8px;background:#fff;border:1px solid #a9c7ea;padding-left:21px;color:#0a6cce;font-weight:700;font-size:14px}.s{position:absolute;left:-15px;top:-5px}span{width:16px;text-align:center}`,
`${ic('sogou','class="s"')}<span>中</span><span>°,</span>${'imic ikey ishirt igame igrid igear'.split(' ').map(n=>bi(n,n)).join('')}`);
reg('nx-status',`:host{display:flex;justify-content:flex-end;align-items:center;gap:6px;height:22px;border-top:1px solid #a8a8a8;padding-right:53px;font-size:11px;background:#fff}`,`${ic('bellS')}<span>3 通知</span>`);

reg('nx-app',`:host{display:flex;flex-direction:column;height:100vh;position:relative}
.top{background:linear-gradient(90deg,#006489,#0579a3)}main{flex:1;display:flex;min-height:0}
.wm{position:absolute;right:5px;bottom:14px;font:300 38px/44px "Noto Sans CJK SC",sans-serif;color:rgba(225,225,225,.85);text-shadow:1px 1px 1px rgba(90,90,90,.7);pointer-events:none;white-space:nowrap}`,`
<div class="top"><nx-titlebar></nx-titlebar><nx-menubar></nx-menubar></div><nx-ribbon></nx-ribbon><nx-selbar></nx-selbar>
<main><nx-rail></nx-rail><nx-navigator></nx-navigator><nx-canvas></nx-canvas></main><nx-status></nx-status><nx-ime></nx-ime><div class="wm">CSDN @山涧果子</div>`);
</script>
</body>
</html>
